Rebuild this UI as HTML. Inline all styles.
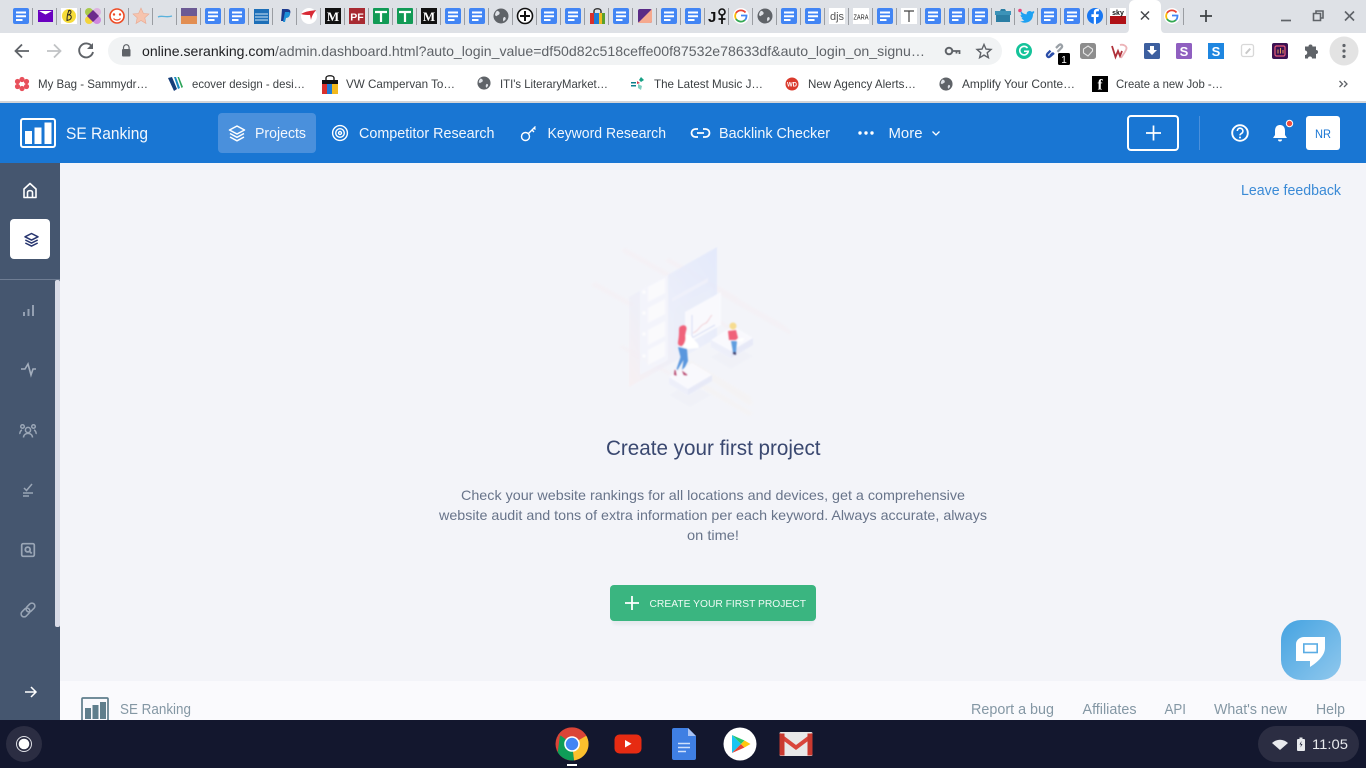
<!DOCTYPE html>
<html><head><meta charset="utf-8"><title>SE Ranking</title>
<style>
html,body{margin:0;padding:0;width:1366px;height:768px;overflow:hidden;background:#f3f4f9}
svg{display:block;position:absolute;left:0;top:0}
text{font-family:"Liberation Sans",sans-serif}
.bm{font-size:12px;fill:#3c4043}
.nav{font-size:14.5px;fill:#f2f7fd}
.ft{font-size:14.5px;fill:#8497a4}
</style></head><body>
<svg width="1366" height="768" viewBox="0 0 1366 768" xmlns="http://www.w3.org/2000/svg">
<defs>
<symbol id="doc" viewBox="0 0 16 16" overflow="visible"><rect width="16" height="16" rx="2" fill="#4285f4"/><path d="M3 3.500h10v2H3zM3 7.200h10v2H3zM3 11h6.500v2H3z" fill="#fff"/></symbol>
<symbol id="globe" viewBox="0 0 16 16" overflow="visible"><circle cx="8" cy="8" r="7.500" fill="#5f6368"/><path d="M4 2.800c2 .5 3 1.500 2.500 3s-2 1-3 2.500l-1.500-1c0-2 1-3.500 2-4.500zM11 9c1.500 0 2 1 1.500 2.500l-2 2c-.5-1.500-1-3 .5-4.500z" fill="#dee1e6"/></symbol>
<linearGradient id="panel" x1="0" y1="1" x2="1" y2="0"><stop offset="0" stop-color="#f8eff1"/><stop offset=".45" stop-color="#ebeefa"/><stop offset="1" stop-color="#e0e7fc"/></linearGradient>
<linearGradient id="chat" x1="0" y1="0" x2="1" y2="1"><stop offset="0" stop-color="#45a3e1"/><stop offset="1" stop-color="#90c8ed"/></linearGradient>
<filter id="b1"><feGaussianBlur stdDeviation=".7"/></filter>
<filter id="b2"><feGaussianBlur stdDeviation="1.200"/></filter>
</defs>

<!-- page -->
<rect width="1366" height="768" fill="#f3f4f9"/>

<!-- tab strip -->
<rect width="1366" height="33" fill="#dee1e6"/>
<path d="M1125 33c3 0 4-2 4-5V6c0-3 2-6 6-6h20c4 0 6 3 6 6v22c0 3 1 5 4 5z" fill="#fff"/>
<g stroke="#9a9da2" stroke-width="1"><path d="M32.500 8v17M56.500 8v17M80.500 8v17M104.500 8v17M128.500 8v17M152.500 8v17M176.500 8v17M200.500 8v17M224.500 8v17M248.500 8v17M272.500 8v17M296.500 8v17M320.500 8v17M344.500 8v17M368.500 8v17M392.500 8v17M416.500 8v17M440.500 8v17M464.500 8v17M488.500 8v17M512.500 8v17M536.500 8v17M560.500 8v17M584.500 8v17M608.500 8v17M632.500 8v17M656.500 8v17M680.500 8v17M704.500 8v17M728.500 8v17M752.500 8v17M776.500 8v17M800.500 8v17M824.500 8v17M848.500 8v17M872.500 8v17M896.500 8v17M920.500 8v17M944.500 8v17M968.500 8v17M991.500 8v17M1014.500 8v17M1037.500 8v17M1060.500 8v17M1083.500 8v17M1106.500 8v17M1183.500 8v17"/></g>

<use href="#doc" x="13" y="8" width="16" height="16"/>
<rect x="38" y="10" width="15" height="12" fill="#6a00c0"/><path d="M39 11h13l-6.500 3.500z" fill="#fff"/>
<rect x="61" y="8" width="16" height="16" fill="#fff"/><circle cx="69" cy="16" r="7" fill="#f6dc3a"/><path d="M70 10c-3 2-3 9-3 11M68 11c4-2 4 3 0 4 5-1 4 6-1 5" fill="none" stroke="#222" stroke-width="1"/>
<circle cx="89" cy="12" r="4" fill="#a8c94a"/><circle cx="97" cy="12" r="4" fill="#ddb3e0"/><circle cx="89" cy="20" r="4" fill="#f3d43a"/><circle cx="97" cy="20" r="4" fill="#cf88df"/><path d="M93 10l6 6-6 6-6-6z" fill="#6c2a8c"/>
<circle cx="117" cy="16" r="7" fill="#fff" stroke="#ee4a23" stroke-width="1.600"/><circle cx="114" cy="14.500" r="1.200" fill="#ee4a23"/><circle cx="120" cy="14.500" r="1.200" fill="#ee4a23"/><path d="M113.500 18.500c2 2 5 2 7 0" fill="none" stroke="#ee4a23" stroke-width="1.200"/>
<path d="M141 8l2.400 5.400 5.600.6-4.200 3.800 1.200 5.700-5-3-5 3 1.200-5.700-4.200-3.800 5.600-.6z" fill="#f6c4ae" stroke="#e9a890" stroke-width=".6"/>
<path d="M158 17c4-2 8 1 14-1" fill="none" stroke="#5ab2dc" stroke-width="1.300"/>
<rect x="181" y="8" width="16" height="8" fill="#6c5a94"/><rect x="181" y="16" width="16" height="8" fill="#e28e52"/>
<use href="#doc" x="205" y="8" width="16" height="16"/><use href="#doc" x="229" y="8" width="16" height="16"/>
<rect x="254" y="9" width="15" height="15" fill="#1d6fb8"/><path d="M255 14h13M255 17h13M255 20h13" stroke="#cfe4f4" stroke-width="1"/>
<path d="M282 9h5c3 0 4 2 3 5s-3 3-5 3l-1 4h-3z" fill="#1c3a8e"/><path d="M285 12h4c2 1 1 6-3 6l-1 4h-2z" fill="#1e90d8"/>
<circle cx="309" cy="16" r="8" fill="#fff"/><path d="M301 14c5-3 10-3 15-4-2 3-4 5-5 10l-1-5c-3 0-6 0-9-1z" fill="#d82a35"/>
<rect x="325" y="8" width="16" height="16" fill="#111"/><text x="333" y="21" font-size="13" font-weight="700" fill="#fff" text-anchor="middle" style="font-family:'Liberation Serif',serif">M</text>
<rect x="349" y="8" width="16" height="16" fill="#a82a32"/><text x="357" y="20.500" font-size="10.500" font-weight="700" fill="#fff" text-anchor="middle">PF</text>
<rect x="373" y="8" width="16" height="16" rx="1" fill="#119a55"/><path d="M375 12h12M381 12v10" stroke="#fff" stroke-width="2.200"/>
<rect x="397" y="8" width="16" height="16" rx="1" fill="#119a55"/><path d="M399 12h12M405 12v10" stroke="#fff" stroke-width="2.200"/>
<rect x="421" y="8" width="16" height="16" fill="#111"/><text x="429" y="21" font-size="13" font-weight="700" fill="#fff" text-anchor="middle" style="font-family:'Liberation Serif',serif">M</text>
<use href="#doc" x="445" y="8" width="16" height="16"/><use href="#doc" x="469" y="8" width="16" height="16"/>
<use href="#globe" x="493" y="8" width="16" height="16"/>
<circle cx="525" cy="16" r="7.500" fill="#fff" stroke="#111" stroke-width="1.600"/><path d="M520 16h10M525 11v10" stroke="#111" stroke-width="2"/>
<use href="#doc" x="541" y="8" width="16" height="16"/><use href="#doc" x="565" y="8" width="16" height="16"/>
<path d="M590 13h15v11h-15z" fill="#1d7bd8"/><path d="M590 13h4v11h-4z" fill="#d9302c"/><path d="M599 13h3v11h-3z" fill="#f2b91d"/><path d="M602 13h3v11h-3z" fill="#5aa02c"/><path d="M594 13v-2c0-3 7-3 7 0v2" fill="none" stroke="#222" stroke-width="1.300"/>
<use href="#doc" x="613" y="8" width="16" height="16"/>
<rect x="638" y="9" width="14" height="14" rx="2" fill="#5a2a86"/><path d="M652 9v12a2 2 0 0 1-2 2h-12z" fill="#f5a98e"/>
<use href="#doc" x="661" y="8" width="16" height="16"/><use href="#doc" x="685" y="8" width="16" height="16"/>
<text x="708" y="22" font-size="15" font-weight="700" fill="#111">J</text><circle cx="722" cy="12" r="3" fill="none" stroke="#111" stroke-width="1.600"/><path d="M722 15v9M718.500 19h7" stroke="#111" stroke-width="1.800"/>
<circle cx="741" cy="16" r="8" fill="#fff"/><path d="M745.500 12.500A6 6 0 0 0 736 13" fill="none" stroke="#ea4335" stroke-width="1.800"/><path d="M736 13a6 6 0 0 0 0 6" fill="none" stroke="#fbbc05" stroke-width="1.800"/><path d="M736 19a6 6 0 0 0 9 1" fill="none" stroke="#34a853" stroke-width="1.800"/><path d="M741 15.500h5.500c0 2-.5 3.500-1.500 4.500" fill="none" stroke="#4285f4" stroke-width="1.800"/>
<use href="#globe" x="757" y="8" width="16" height="16"/>
<use href="#doc" x="781" y="8" width="16" height="16"/><use href="#doc" x="805" y="8" width="16" height="16"/>
<rect x="829" y="8" width="16" height="16" fill="#fff"/><text x="837" y="20" font-size="11" fill="#555" text-anchor="middle">djs</text>
<rect x="853" y="8" width="16" height="16" fill="#fff"/><text x="861" y="19.500" font-size="7.500" fill="#222" text-anchor="middle" textLength="15" lengthAdjust="spacingAndGlyphs">ZARA</text>
<use href="#doc" x="877" y="8" width="16" height="16"/>
<rect x="901" y="8" width="16" height="16" fill="#fff"/><path d="M904 11h10M909 11v11" stroke="#444" stroke-width="1.200"/>
<use href="#doc" x="925" y="8" width="16" height="16"/><use href="#doc" x="949" y="8" width="16" height="16"/><use href="#doc" x="972" y="8" width="16" height="16"/>
<path d="M996 12h14v10h-14z" fill="#2b7ea4"/><path d="M995 11h16v4h-16z" fill="#3c93b8"/><path d="M1000 11l1-2h4l1 2" fill="#2b7ea4"/>
<circle cx="1020" cy="10.500" r="1.800" fill="#e8477b"/><path d="M1034 11c-1 .6-2 .8-2.500.8-1-1.200-3.500-1-4.500.6-.4.700-.4 1.300-.3 1.900-2.500 0-4.300-1.300-5.700-3-.7 1.600 0 3 1 4l-1.500-.3c.1 1.500 1 2.600 2.500 3l-1.400.1c.5 1.200 1.500 1.900 2.800 2-1.200 1-2.800 1.400-4.200 1.300 5 3 13 1 12.800-7.500.6-.5 1-1 1.300-1.800z" fill="#1ea1f2"/>
<use href="#doc" x="1041" y="8" width="16" height="16"/><use href="#doc" x="1064" y="8" width="16" height="16"/>
<circle cx="1095" cy="16" r="8" fill="#1877f2"/><path d="M1096 24v-7h2.400l.4-2.700h-2.800v-1.700c0-.8.300-1.300 1.400-1.300h1.500V9c-2.800-.5-5.100.2-5.100 3.200v2.100h-2.400V17h2.400v7z" fill="#fff"/>
<rect x="1110" y="8" width="16" height="16" fill="#fff"/><rect x="1110" y="16" width="16" height="8" fill="#b01116"/><text x="1118" y="15" font-size="7" font-weight="700" fill="#111" text-anchor="middle">sky</text>
<path d="M1141 11.500l8 8M1149 11.500l-8 8" stroke="#45484c" stroke-width="1.500"/>
<circle cx="1172" cy="16" r="8" fill="#fff"/><path d="M1176.500 12.500A6 6 0 0 0 1167 13" fill="none" stroke="#ea4335" stroke-width="1.800"/><path d="M1167 13a6 6 0 0 0 0 6" fill="none" stroke="#fbbc05" stroke-width="1.800"/><path d="M1167 19a6 6 0 0 0 9 1" fill="none" stroke="#34a853" stroke-width="1.800"/><path d="M1172 15.500h5.500c0 2-.5 3.500-1.500 4.500" fill="none" stroke="#4285f4" stroke-width="1.800"/>
<path d="M1200 16h12M1206 10v12" stroke="#3c4043" stroke-width="1.700"/>
<path d="M1281 20.500h10" stroke="#5f6368" stroke-width="1.700"/>
<path d="M1313.500 13.500h7v7h-7zM1316 13.500v-2.500h7v7h-2.500" fill="none" stroke="#5f6368" stroke-width="1.600"/>
<path d="M1345 11.500l9 9M1354 11.500l-9 9" stroke="#5f6368" stroke-width="1.600"/>

<!-- toolbar -->
<rect y="33" width="1366" height="34" fill="#fff"/>
<path d="M29 51H16M22 44.500L15.500 51l6.500 6.500" fill="none" stroke="#5f6368" stroke-width="1.800"/>
<path d="M47 51h13M54 44.500l6.500 6.500-6.500 6.500" fill="none" stroke="#c0c2c5" stroke-width="1.800"/>
<path d="M92 46.500A7 7 0 1 0 93 52" fill="none" stroke="#5f6368" stroke-width="1.900"/><path d="M93 43v6h-6z" fill="#5f6368"/>
<rect x="108" y="37" width="894" height="28" rx="14" fill="#f1f3f4"/>
<rect x="122" y="49" width="8.500" height="7.500" rx="1" fill="#5f6368"/><path d="M123.500 49v-1.500a2.800 2.800 0 0 1 5.600 0V49" fill="none" stroke="#5f6368" stroke-width="1.200"/>
<text x="142" y="56" font-size="14" fill="#202124" textLength="133" lengthAdjust="spacingAndGlyphs">online.seranking.com</text>
<text x="275" y="56" font-size="14" fill="#5f6368" textLength="650" lengthAdjust="spacingAndGlyphs">/admin.dashboard.html?auto_login_value=df50d82c518ceffe00f87532e78633df&amp;auto_login_on_signu…</text>
<circle cx="949" cy="51" r="3.300" fill="none" stroke="#5f6368" stroke-width="2"/><path d="M952 51h7.500v3M956.500 51v2.500" fill="none" stroke="#5f6368" stroke-width="1.800"/>
<path d="M984 44.500l2 4.600 5 .4-3.800 3.300 1.200 4.900-4.400-2.600-4.400 2.600 1.200-4.900-3.800-3.300 5-.4z" fill="none" stroke="#5f6368" stroke-width="1.400"/>

<circle cx="1024" cy="51" r="8" fill="#15c39a"/><path d="M1027.500 48a4.300 4.300 0 1 0 .8 3.300H1024" fill="none" stroke="#fff" stroke-width="1.600"/>
<path d="M1050 56l3-3M1054 53l-4 3.500c-2 1.500-4-1-2.500-2.800l3-3" fill="none" stroke="#2a4da8" stroke-width="2.300"/><path d="M1056 48l3-3c2-1.500 4 .8 2.500 2.800l-4 4" fill="none" stroke="#9aa0a6" stroke-width="2.300"/>
<rect x="1058" y="53" width="12" height="12" rx="1.500" fill="#000"/><text x="1064" y="63" font-size="10" fill="#fff" text-anchor="middle">1</text>
<rect x="1080" y="43" width="16" height="16" rx="2.500" fill="#8d8d8d"/><path d="M1088 46l4.500 3v2l-4.500 5-4.500-3v-4z" fill="none" stroke="#e5e5e5" stroke-width="1.100"/>
<path d="M1112 46l3.500 11 2.500-6 2 5 2-5" fill="none" stroke="#b0313a" stroke-width="1.800"/><path d="M1120 45c3-1 8 1 6 5s-4 6-5 8" fill="none" stroke="#ecb4b8" stroke-width="1.800"/>
<rect x="1144" y="43" width="16" height="16" rx="1.500" fill="#3d5f9f"/><path d="M1150 46h4v4h3l-5 5-5-5h3z" fill="#fff"/>
<rect x="1176" y="43" width="16" height="16" rx="1.500" fill="#8f5fc0"/><text x="1184" y="56" font-size="13" font-weight="700" fill="#fff" text-anchor="middle">S</text>
<rect x="1208" y="43" width="16" height="16" fill="#1e86e0"/><text x="1216" y="56" font-size="13" font-weight="700" fill="#fff" text-anchor="middle">S</text>
<rect x="1241.500" y="44.500" width="12" height="12" rx="2" fill="none" stroke="#d8d8d8" stroke-width="1.300"/><path d="M1245 53l4.500-5 1.500 1.200-4.500 5z" fill="#c8c8c8"/>
<rect x="1272" y="43" width="16" height="16" rx="2" fill="#3b1252"/><rect x="1275" y="46" width="10" height="10" rx="1.500" fill="none" stroke="#e85a7a" stroke-width="1.200"/><path d="M1278 49.500v4M1280.500 48v5.500M1283 50v3.500" stroke="#e89a5a" stroke-width="1"/>
<path d="M1306 46h3.500a2 2 0 0 1 4 0h3.500v3.500a2 2 0 0 1 0 4v4.500h-4a2 2 0 0 0-4 0h-3v-3.500a2.200 2.200 0 0 0 0-4.500z" fill="#5f6368" transform="translate(-1 .5)"/>
<circle cx="1344" cy="51" r="14.500" fill="#e3e3e3"/><circle cx="1344" cy="45.500" r="1.600" fill="#5f6368"/><circle cx="1344" cy="51" r="1.600" fill="#5f6368"/><circle cx="1344" cy="56.500" r="1.600" fill="#5f6368"/>

<!-- bookmarks -->
<rect y="67" width="1366" height="35" fill="#fff"/>
<rect y="101" width="1366" height="2" fill="#d3d5d8"/>
<g fill="#e8505b"><circle cx="22" cy="79.500" r="2.600"/><circle cx="22" cy="88.500" r="2.600"/><circle cx="17.500" cy="81.500" r="2.600"/><circle cx="26.500" cy="81.500" r="2.600"/><circle cx="17.500" cy="86.500" r="2.600"/><circle cx="26.500" cy="86.500" r="2.600"/></g><circle cx="22" cy="84" r="1.300" fill="#fff"/>
<path d="M168 78l4-1 5 12-3 2z" fill="#153e7a"/><path d="M174 77l2 0 4 11-2 1z" fill="#1a8bc0"/><path d="M177.500 77l1.500 0 4 10-1.500 1z" fill="#2fa55a"/>
<path d="M322 80h16v14h-16z" fill="#111"/><path d="M322 84h5v10h-5z" fill="#d9302c"/><path d="M327 84h5v10h-5z" fill="#1d7bd8"/><path d="M332 84h6v10h-6z" fill="#f2b91d"/><path d="M326 80v-2c0-3 8-3 8 0v2" fill="none" stroke="#111" stroke-width="1.300"/>
<use href="#globe" x="477" y="76" width="14" height="14"/>
<path d="M631 82h5v1.500h-5zM631 85h5v1.500h-5z" fill="#0d7f8c"/><path d="M641 77l3 3-3 2-2-2z" fill="#17a085"/><path d="M638 84l4 2-1 4-3-2z" fill="#7fd0c0"/><path d="M637 81l3 2-3 1z" fill="#d43b4f"/>
<circle cx="792" cy="84" r="6.500" fill="#da3a2c"/><text x="792" y="86.500" font-size="6" font-weight="700" fill="#fff" text-anchor="middle">WD</text>
<use href="#globe" x="939" y="77" width="14" height="14"/>
<rect x="1092" y="76" width="16" height="16" fill="#000"/><text x="1100" y="89.500" font-size="15" font-weight="700" fill="#fff" text-anchor="middle" style="font-family:'Liberation Serif',serif">f</text>
<text class="bm" x="38" y="88" textLength="110" lengthAdjust="spacingAndGlyphs">My Bag - Sammydr…</text>
<text class="bm" x="192" y="88" textLength="113" lengthAdjust="spacingAndGlyphs">ecover design - desi…</text>
<text class="bm" x="346" y="88" textLength="109" lengthAdjust="spacingAndGlyphs">VW Campervan To…</text>
<text class="bm" x="500" y="88" textLength="108" lengthAdjust="spacingAndGlyphs">ITI's LiteraryMarket…</text>
<text class="bm" x="654" y="88" textLength="109" lengthAdjust="spacingAndGlyphs">The Latest Music J…</text>
<text class="bm" x="808" y="88" textLength="108" lengthAdjust="spacingAndGlyphs">New Agency Alerts…</text>
<text class="bm" x="962" y="88" textLength="113" lengthAdjust="spacingAndGlyphs">Amplify Your Conte…</text>
<text class="bm" x="1116" y="88" textLength="107" lengthAdjust="spacingAndGlyphs">Create a new Job -…</text>
<path d="M1339.500 81l3 3-3 3M1344 81l3 3-3 3" fill="none" stroke="#5f6368" stroke-width="1.300"/>

<!-- app nav -->
<rect y="103" width="1366" height="60" fill="#1976d3"/>
<rect x="21" y="119" width="34" height="28" rx="2" fill="none" stroke="#fff" stroke-width="2"/>
<path d="M25 131h7v13h-7zM34.500 127.500h7v16.500h-7zM44.500 122.500h7v21.500h-7z" fill="#fff"/>
<text x="66" y="139" font-size="16.500" fill="#f2f7fd" textLength="82" lengthAdjust="spacingAndGlyphs">SE Ranking</text>
<rect x="218" y="113" width="98" height="40" rx="4" fill="#4a90dc"/>
<g fill="none" stroke="#fff" stroke-width="1.500" stroke-linejoin="round"><path d="M237 126l7.500 4-7.500 4-7.500-4z"/><path d="M230 133.500l7 3.800 7-3.800M230 137l7 3.800 7-3.800"/></g>
<text class="nav" x="255" y="138" textLength="51" lengthAdjust="spacingAndGlyphs">Projects</text>
<g fill="none" stroke="#fff" stroke-width="1.400"><circle cx="340" cy="133" r="7.400"/><circle cx="340" cy="133" r="4.300"/><circle cx="340" cy="133" r="1.500"/></g>
<text class="nav" x="359" y="138" textLength="135.500" lengthAdjust="spacingAndGlyphs">Competitor Research</text>
<g fill="none" stroke="#fff" stroke-width="1.400"><circle cx="525.500" cy="136.500" r="4"/><path d="M528.500 133.500l7-7M532 130l2 2M534 128l1.500 1.500"/></g>
<text class="nav" x="547.500" y="138" textLength="118.500" lengthAdjust="spacingAndGlyphs">Keyword Research</text>
<g fill="none" stroke="#fff" stroke-width="1.800"><path d="M698 129h-2.500a4 4 0 0 0 0 8h2.500M703 129h2.500a4 4 0 0 1 0 8H703M697 133h7"/></g>
<text class="nav" x="719" y="138" textLength="111" lengthAdjust="spacingAndGlyphs">Backlink Checker</text>
<circle cx="860" cy="133" r="1.700" fill="#fff"/><circle cx="866" cy="133" r="1.700" fill="#fff"/><circle cx="872" cy="133" r="1.700" fill="#fff"/>
<text class="nav" x="888.500" y="138" textLength="34" lengthAdjust="spacingAndGlyphs">More</text>
<path d="M932.500 131.500l3.500 3.500 3.500-3.500" fill="none" stroke="#fff" stroke-width="1.300"/>
<rect x="1128" y="116" width="50" height="34" rx="3" fill="none" stroke="#fff" stroke-width="2"/>
<path d="M1146 133h15M1153.500 125.500v15" stroke="#fff" stroke-width="1.700"/>
<rect x="1199" y="116" width="1" height="34" fill="#4a90dc"/>
<circle cx="1240" cy="133" r="7.800" fill="none" stroke="#fff" stroke-width="1.900"/><path d="M1237.300 131a2.800 2.800 0 1 1 4.200 2.400c-1 .6-1.500 1-1.500 2" fill="none" stroke="#fff" stroke-width="1.600"/><circle cx="1240" cy="137.500" r="1" fill="#fff"/>
<path d="M1280 125c3.500 0 5 2.500 5 6v4l2 3h-14l2-3v-4c0-3.500 1.500-6 5-6z" fill="#fff"/><path d="M1278 139.500h4a2 2 0 0 1-4 0z" fill="#fff"/>
<circle cx="1289.500" cy="123.500" r="3.200" fill="#ef4d3f" stroke="#fff" stroke-width="1"/>
<rect x="1306" y="116" width="34" height="34" rx="3" fill="#fff"/>
<text x="1323" y="138" font-size="12" fill="#1976d3" text-anchor="middle" textLength="16" lengthAdjust="spacingAndGlyphs">NR</text>

<!-- sidebar -->
<rect y="163" width="60" height="557" fill="#45566f"/>
<rect y="279" width="60" height="1" fill="#6f7d93"/>
<rect x="55" y="280" width="5" height="347" rx="2" fill="#d8dbe7"/>
<path d="M24 189l6-5.500 6 5.500v8.500H24zM27.500 197.500v-5c0-2.500 5-2.500 5 0v5" fill="none" stroke="#fff" stroke-width="1.600" stroke-linejoin="round"/>
<rect x="10" y="219" width="40" height="40" rx="4" fill="#fff"/>
<g fill="none" stroke="#26346e" stroke-width="1.500" stroke-linejoin="round"><path d="M31.500 233.500l6.500 3.300-6.500 3.300-6.500-3.300z"/><path d="M25.300 240l6.200 3.100 6.200-3.100M25.300 243l6.200 3.100 6.200-3.100"/></g>
<path d="M24 316v-4M28.500 316v-7M33 316v-11" fill="none" stroke="#94a0b2" stroke-width="2"/>
<path d="M21 369h4l3-5 3 11 2-6h3" fill="none" stroke="#a3aebd" stroke-width="1.600"/>
<g fill="none" stroke="#9aa6b6" stroke-width="1.500">
<circle cx="28" cy="430" r="2.600"/><path d="M23.500 437.500c0-5.500 9-5.500 9 0"/><circle cx="22.500" cy="426.500" r="1.800"/><circle cx="33.500" cy="426.500" r="1.800"/><path d="M20 434c-.5-1 .5-3.500 2-4M36 434c.5-1-.5-3.500-2-4"/>
<path d="M24 488l2.500 2.500 5.500-6.500M23 493h10M23 496h6"/>
<rect x="21.700" y="543.700" width="12.600" height="12.600" rx="1.500" stroke-width="1.700"/><circle cx="27.700" cy="549.500" r="2.400" stroke-width="1.800"/><path d="M29.500 551.300l2.200 2.200" stroke-width="1.800"/>
<rect x="20.500" y="609.500" width="10" height="6" rx="3" transform="rotate(-45 25.500 612.500)"/><rect x="25.500" y="604.500" width="10" height="6" rx="3" transform="rotate(-45 30.500 607.500)"/>
</g>
<path d="M25 692h10.500M31 687l5 5-5 5" fill="none" stroke="#fff" stroke-width="1.500"/>

<!-- feedback -->
<text x="1241" y="195" font-size="14.500" fill="#3a8ad6" textLength="100" lengthAdjust="spacingAndGlyphs">Leave feedback</text>

<!-- illustration -->
<g filter="url(#b2)" opacity=".22">
<path d="M625 248l60 34-4 3-60-34zM669 258l70 40-4 3-70-40zM595 282l40 22-4 3-40-22z" fill="#fae6e8"/>
<path d="M722 290l60 34 10 8-3 2-70-40zM720 320l30 20-3 2-30-20zM622 345l50 28-3 2-50-28z" fill="#f7e5e8"/>
<path d="M690 360l60 36 3 8-5 1-60-40zM695 378l58 35-4 3-60-35z" fill="#f8efe4"/>
</g>
<g filter="url(#b1)" opacity=".78">
<path d="M629 297l88-50v91l-88 49z" fill="url(#panel)"/>
<path d="M640 290l28-15v85l-28 15z" fill="#f4f5fc"/>
<path d="M648 287l17-9v15l-17 9zM648 308l17-9v15l-17 9zM648 330l17-9v15l-17 9zM648 350l17-9v15l-17 9z" fill="#fcfcfe"/>
<circle cx="644" cy="292" r="1.800" fill="#fff"/><circle cx="644" cy="313" r="1.800" fill="#fff"/><circle cx="644" cy="334" r="1.800" fill="#fff"/><circle cx="644" cy="356" r="1.800" fill="#fff"/>
<path d="M672 298l36-20v4l-36 20z" fill="#eef0fb"/>
<path d="M674 309l38-22v40l-38 22z" fill="#e8ecfa" opacity=".6"/>
<path d="M685 312l36-20v33l-36 20z" fill="#fbfbff"/>
<path d="M692 315v23l23-13" fill="none" stroke="#c3cdf0" stroke-width=".8"/>
<path d="M693 333c6-2 7-8 11-9s5-6 8-9" fill="none" stroke="#f0b9c0" stroke-width=".8"/>
<!-- platforms -->
<path d="M669 386l21-12 21 12-21 12z" fill="#eef0f6" transform="translate(0 9)" opacity=".7"/>
<path d="M669 377l23-14 20 12-24 14z" fill="#fbfbff"/>
<path d="M669 377l19 12v6l-19-11z" fill="#eceefa"/><path d="M688 389l24-14v6l-24 14z" fill="#e4e7f7"/>
<path d="M711 347l22-12 20 11-22 13z" fill="#eef0f6" transform="translate(0 10)" opacity=".7"/>
<path d="M711 340l22-14 20 12-22 13z" fill="#fbfbff"/>
<path d="M711 340l20 11v7l-20-11z" fill="#eceefa"/><path d="M731 351l22-13v7l-22 13z" fill="#e4e7f7"/>
</g>
<g filter="url(#b1)">
<!-- person 1 -->
<path d="M678 347l9 2 1 12-3 6-3 3 1.500-10-6 10-1-1 4-12z" fill="#5a97de"/>
<path d="M684 335l6 0 8 9 1 4-11 1-5-2z" fill="#fff"/>
<path d="M681 326c3-2 6 0 5.500 3s-1.500 4-1 8-2 9-4 9-4-1-3.500-4 1-6 1-10 0-5 2-6z" fill="#f0627a"/>
<path d="M675 370l1 5-1.500-.5z M683 372l4 3-3-.5z" fill="#b84a70" stroke="#b84a70" stroke-width="1"/>
<!-- person 2 -->
<circle cx="733" cy="326" r="3.500" fill="#f6dc90"/>
<path d="M728 331l8-1 2 8-2 2-7 0z" fill="#f0627a"/>
<path d="M731 341l2 11h3l1-11z" fill="#5f9ddf"/>
<path d="M735 341l6-3 4 .5-3 3z" fill="#fff"/>
<path d="M733 352l0 2 3 1 0-3z" fill="#3d3d6c"/>
</g>

<!-- empty state text -->
<text x="606" y="455" font-size="21" fill="#3a4870" textLength="214.500" lengthAdjust="spacingAndGlyphs">Create your first project</text>
<g font-size="14" fill="#68748a">
<text x="461" y="500" textLength="504" lengthAdjust="spacingAndGlyphs">Check your website rankings for all locations and devices, get a comprehensive</text>
<text x="439" y="520" textLength="548" lengthAdjust="spacingAndGlyphs">website audit and tons of extra information per each keyword. Always accurate, always</text>
<text x="687" y="540" textLength="52" lengthAdjust="spacingAndGlyphs">on time!</text>
</g>

<!-- button -->
<rect x="612" y="589" width="202" height="36" rx="4" fill="#c8d2d8" opacity=".3" filter="url(#b2)"/>
<rect x="610" y="585" width="206" height="36" rx="4" fill="#3ab580"/>
<path d="M625 603h14M632 596v14" stroke="#fff" stroke-width="1.800"/>
<text x="649.500" y="607" font-size="10.500" fill="#eefaf4" textLength="156.500" lengthAdjust="spacingAndGlyphs">CREATE YOUR FIRST PROJECT</text>

<!-- footer -->
<rect x="60" y="681" width="1306" height="39" fill="#fafafd"/>
<rect x="82" y="698" width="26" height="23" rx="1" fill="none" stroke="#5f7e8c" stroke-width="1.700"/>
<path d="M85 708h6v11h-6zM92.500 705h6v14h-6zM100 702h6v17h-6z" fill="#5f7e8c"/>
<text x="120" y="714" font-size="14.500" fill="#8497a4" textLength="71" lengthAdjust="spacingAndGlyphs">SE Ranking</text>
<text class="ft" x="971" y="714" textLength="83" lengthAdjust="spacingAndGlyphs">Report a bug</text>
<text class="ft" x="1082.500" y="714" textLength="54" lengthAdjust="spacingAndGlyphs">Affiliates</text>
<text class="ft" x="1164.500" y="714" textLength="21.500" lengthAdjust="spacingAndGlyphs">API</text>
<text class="ft" x="1214" y="714" textLength="73" lengthAdjust="spacingAndGlyphs">What's new</text>
<text class="ft" x="1316" y="714" textLength="29" lengthAdjust="spacingAndGlyphs">Help</text>

<!-- chat -->
<rect x="1281" y="620" width="60" height="60" rx="20" fill="url(#chat)"/>
<path d="M1304 637H1325V648C1325 655 1318 662 1310 667V661H1296V644C1296 640 1300 637 1304 637z" fill="#fff"/>
<rect x="1303.800" y="644" width="13.400" height="8.500" fill="none" stroke="#5badE4" stroke-width="1.600"/>

<!-- shelf -->
<rect y="720" width="1366" height="48" fill="#13172e"/>
<circle cx="24" cy="744" r="18" fill="#2b2d42"/>
<circle cx="24" cy="744" r="7.500" fill="none" stroke="#dfe0e6" stroke-width="1"/><circle cx="24" cy="744" r="5.300" fill="#fff"/>

<!-- chrome -->
<circle cx="572" cy="744" r="16.500" fill="#db4437"/>
<path d="M572 744l14.300-8.300A16.500 16.500 0 0 1 574 760.400z" fill="#fbc02d"/>
<path d="M572 744l2 16.400A16.500 16.500 0 0 1 557.700 752.300L560 735z" fill="#0f9d58"/>
<path d="M557.700 735.700A16.500 16.500 0 0 1 586.300 735.700H572z" fill="#db4437"/>
<circle cx="572" cy="744" r="7.800" fill="#fff"/><circle cx="572" cy="744" r="6.200" fill="#4285f4"/>
<rect x="567" y="764" width="10" height="2" fill="#fff"/>
<!-- youtube -->
<rect x="614.500" y="734.500" width="27" height="19" rx="5" fill="#e62b12"/><path d="M625 740v7.500l6.500-3.700z" fill="#fff"/>
<!-- docs -->
<path d="M674 728h14l8 8v22a2 2 0 0 1-2 2h-20a2 2 0 0 1-2-2v-28a2 2 0 0 1 2-2z" fill="#3f7fe3"/>
<path d="M688 728l8 8h-8z" fill="#a9c4f5"/>
<path d="M678 743.500h12M678 747.500h12M678 751.500h8" stroke="#cfe0fb" stroke-width="1.400"/>
<!-- play -->
<circle cx="740" cy="744" r="16.500" fill="#fff"/>
<path d="M732 735v18l9-9z" fill="#19c5f3"/><path d="M732 735l9 9 3.500-3.500z" fill="#27c56e"/><path d="M732 753l9-9 3.500 3.500z" fill="#ea4335"/><path d="M744.500 740.500l6 3.500-6 3.500-3.500-3.500z" fill="#fdc70c"/>
<!-- gmail -->
<rect x="779.500" y="732" width="33" height="24" rx="1.500" fill="#e8e8e8"/>
<path d="M780 733l16 12 16-12v5l-16 12-16-12z" fill="#d9453b"/>
<path d="M779.500 733.500h5v22h-3.500a1.500 1.500 0 0 1-1.500-1.500zM812.500 733.500h-5v22h3.500a1.500 1.500 0 0 0 1.500-1.500z" fill="#c9392f"/>

<!-- tray -->
<rect x="1258" y="726" width="101" height="36" rx="18" fill="#2b2d42"/>
<path d="M1272 743a11.500 11.500 0 0 1 16 0l-8 7z" fill="#e8eaed"/>
<rect x="1297" y="739" width="8" height="12" rx="1" fill="#e8eaed"/><rect x="1299.500" y="737.500" width="3" height="2" fill="#e8eaed"/><path d="M1301.500 741l-2 3.500h1.500l-.5 3 2-3.500H1301z" fill="#2b2d42"/>
<text x="1312" y="749" font-size="14" fill="#e8eaed" textLength="36" lengthAdjust="spacingAndGlyphs">11:05</text>
</svg>
</body></html>
